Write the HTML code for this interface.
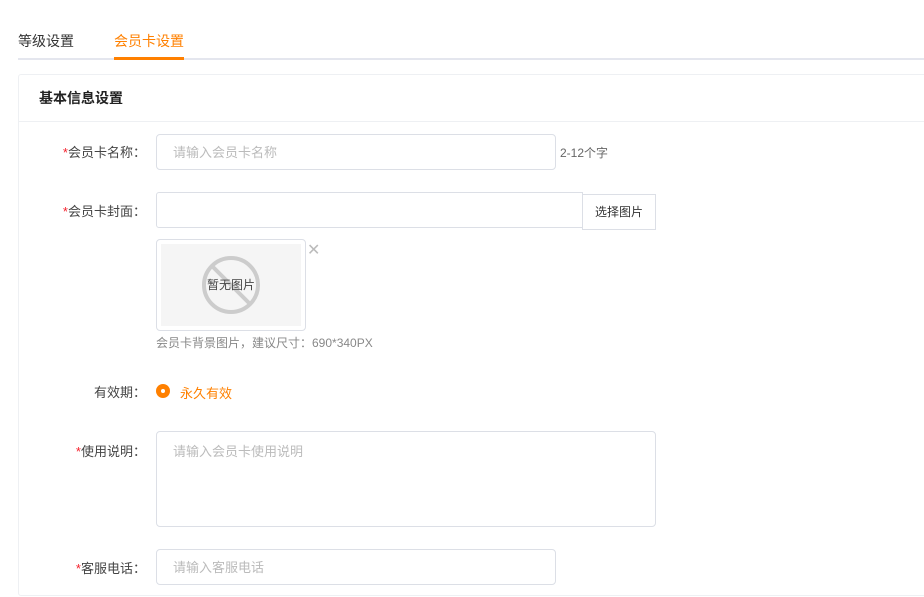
<!DOCTYPE html><html><head><meta charset="utf-8"><style>
body{margin:0;width:924px;height:597px;overflow:hidden;background:#fff;font-family:"Liberation Sans","Noto Sans CJK SC",sans-serif;color:#333;font-size:13px;position:relative}
.a{position:absolute}
.tab{font-size:14px;top:31px}
.lbl{position:absolute;width:146px;text-align:right;left:0;font-size:13px;color:#444}
.lbl b{color:#f5222d;font-weight:normal}
.inp{position:absolute;border:1px solid #dcdfe6;border-radius:4px;box-sizing:border-box;color:#bbb;font-size:13px;padding-left:16px}
</style></head><body>
<div class="a tab" style="left:18px">等级设置</div>
<div class="a tab" style="left:114px;color:#ff8000">会员卡设置</div>
<div class="a" style="left:18px;top:58px;width:906px;height:2px;background:#e4e6ee"></div>
<div class="a" style="left:114px;top:57px;width:70px;height:3px;background:#ff8000"></div>
<div class="a" style="left:18px;top:74px;width:920px;height:522px;border:1px solid #eef0f3;border-radius:3px;box-sizing:border-box"></div>
<div class="a" style="left:39px;top:88px;font-size:14px;font-weight:bold;color:#222">基本信息设置</div>
<div class="a" style="left:19px;top:121px;width:905px;height:1px;background:#eef0f3"></div>

<div class="lbl" style="top:142px"><b>*</b>会员卡名称：</div>
<div class="inp" style="left:156px;top:134px;width:400px;height:36px;line-height:35px">请输入会员卡名称</div>
<div class="a" style="left:560px;top:144px;font-size:12px;color:#666">2-12个字</div>

<div class="lbl" style="top:201px"><b>*</b>会员卡封面：</div>
<div class="inp" style="left:156px;top:192px;width:427px;height:36px;border-radius:3px 0 0 3px"></div>
<div class="a" style="left:582px;top:194px;width:74px;height:36px;border:1px solid #dcdfe6;box-sizing:border-box;font-size:12px;line-height:34px;text-align:center;color:#333">选择图片</div>
<div class="a" style="left:156px;top:239px;width:150px;height:92px;border:1px solid #dcdfe6;border-radius:4px;box-sizing:border-box"></div>
<div class="a" style="left:161px;top:244px;width:140px;height:82px;background:#f5f5f5"></div>
<svg class="a" style="left:200px;top:254px" width="62" height="62"><circle cx="31" cy="31" r="27" fill="none" stroke="#ccc" stroke-width="4"/><line x1="12" y1="12" x2="50" y2="50" stroke="#ccc" stroke-width="4"/></svg>
<div class="a" style="left:207px;top:276px;font-size:12px;color:#444">暂无图片</div>
<div class="a" style="left:307px;top:240px;font-size:16px;color:#bbb">✕</div>
<div class="a" style="left:156px;top:334px;font-size:12px;color:#888">会员卡背景图片，建议尺寸：690*340PX</div>

<div class="lbl" style="top:382px">有效期：</div>
<div class="a" style="left:156px;top:384px;width:14px;height:14px;border-radius:50%;background:#ff8000"></div>
<div class="a" style="left:161px;top:389px;width:4px;height:4px;border-radius:50%;background:#fff"></div>
<div class="a" style="left:180px;top:383px;color:#ff8000">永久有效</div>

<div class="lbl" style="top:441px"><b>*</b>使用说明：</div>
<div class="inp" style="left:156px;top:431px;width:500px;height:96px;padding-top:9px">请输入会员卡使用说明</div>

<div class="lbl" style="top:558px"><b>*</b>客服电话：</div>
<div class="inp" style="left:156px;top:549px;width:400px;height:36px;line-height:35px">请输入客服电话</div>
</body></html>
